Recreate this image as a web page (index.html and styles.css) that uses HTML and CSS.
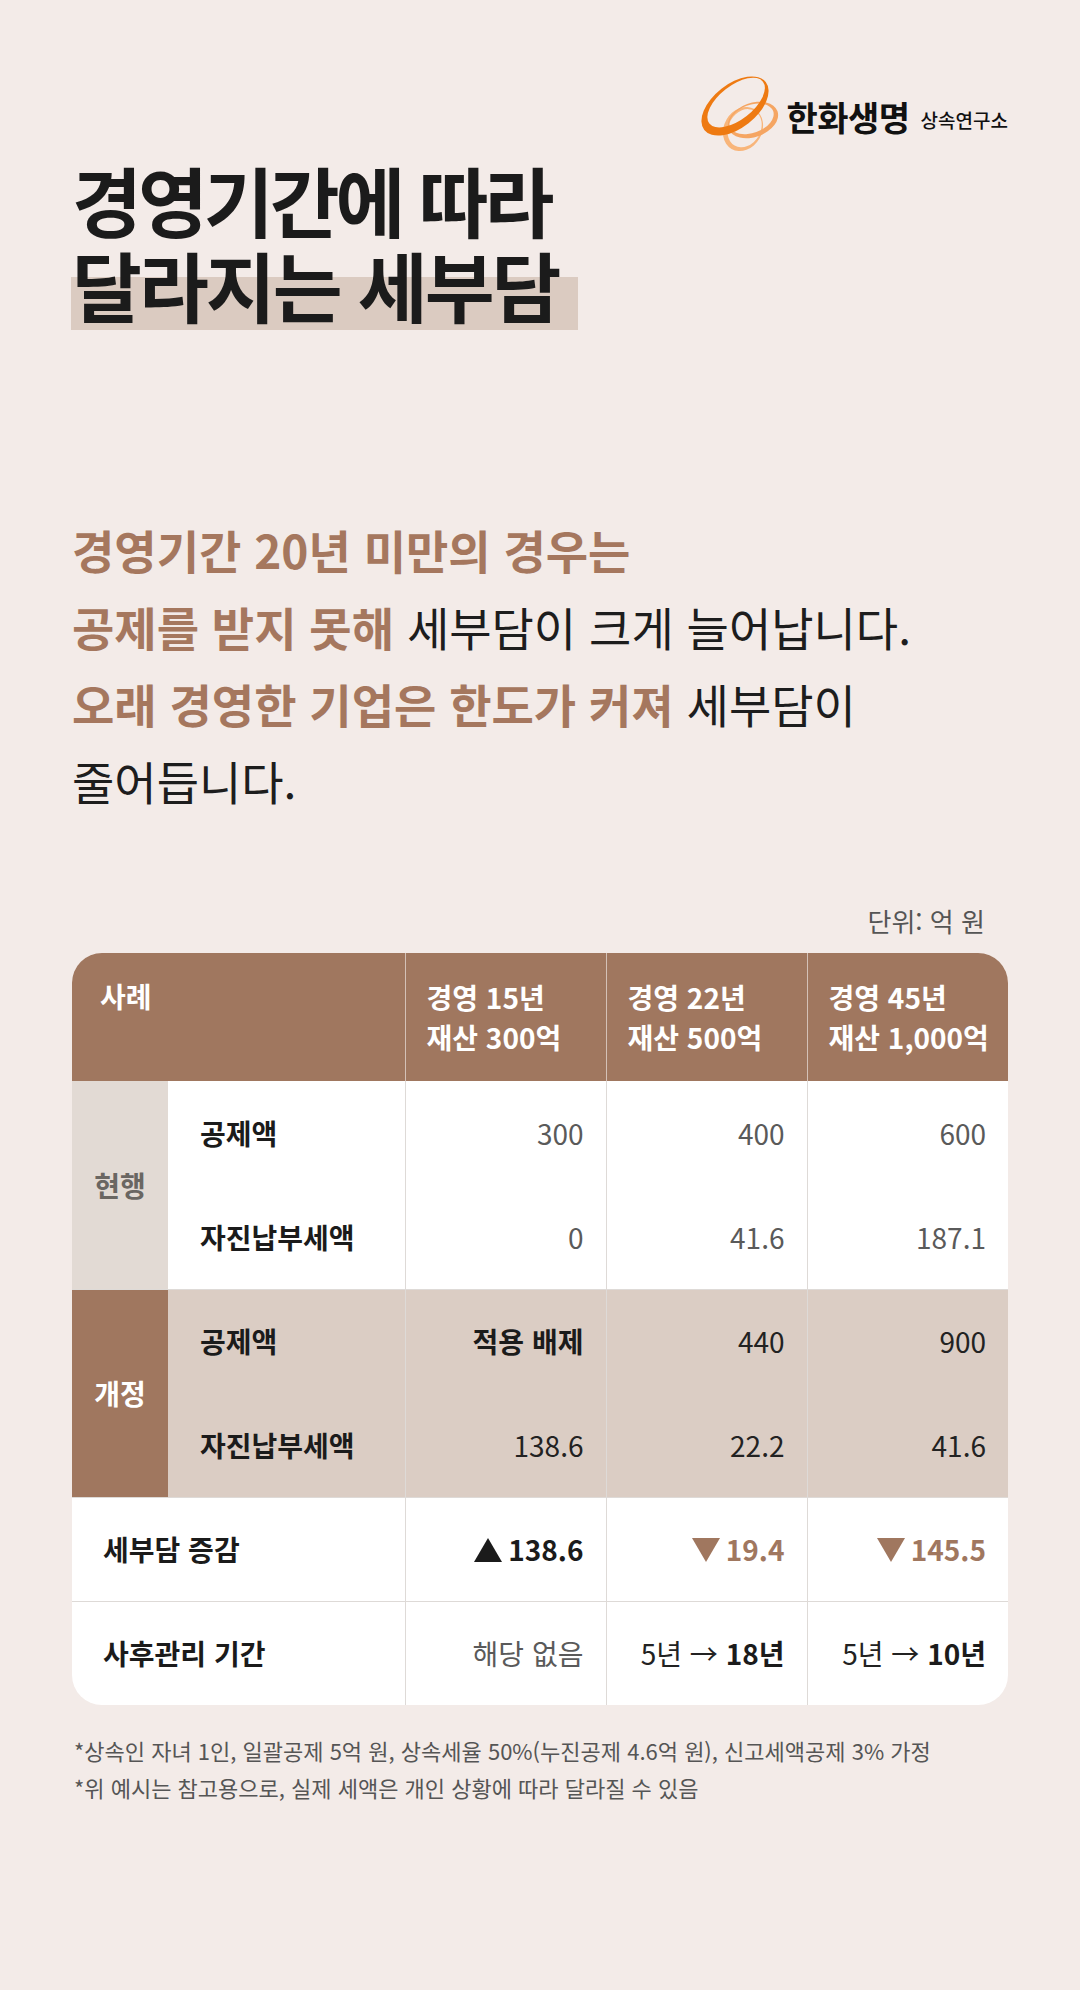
FILE: index.html
```html
<!DOCTYPE html>
<html lang="ko">
<head>
<meta charset="utf-8">
<link rel="stylesheet" href="styles.css">
</head>
<body>
<div class="page">
  <header class="brand">
    <svg class="brand-mark" viewBox="0 0 90 84" width="90" height="84" aria-hidden="true">
      <g transform="translate(47 57) rotate(-60)">
        <path fill="#f8b57a" fill-rule="evenodd" d="M -23 0 A 23 19 0 1 0 23 0 A 23 19 0 1 0 -23 0 Z M -18.5 1 A 20 16 0 1 0 21.5 1 A 20 16 0 1 0 -18.5 1 Z"/>
      </g>
      <g transform="translate(57 48) rotate(-20)">
        <path fill="#f5a562" fill-rule="evenodd" d="M -26 0 A 26 17 0 1 0 26 0 A 26 17 0 1 0 -26 0 Z M -24 -1.5 A 23 14 0 1 0 22 -1.5 A 23 14 0 1 0 -24 -1.5 Z"/>
      </g>
      <g transform="translate(39 34) rotate(-38)">
        <path fill="#ee7a12" fill-rule="evenodd" d="M -39 0 A 39 22 0 1 0 39 0 A 39 22 0 1 0 -39 0 Z M -31 -2 A 34 17 0 1 0 37 -2 A 34 17 0 1 0 -31 -2 Z"/>
      </g>
    </svg>
    <span class="brand-name">한화생명</span>
    <span class="brand-sub">상속연구소</span>
  </header>

  <h1 class="title">
    <span class="title-line">경영기간에 따라</span>
    <span class="title-line title-mark">달라지는 세부담</span>
  </h1>

  <p class="lead">
    <strong>경영기간 20년 미만의 경우는</strong><br>
    <strong>공제를 받지 못해</strong> 세부담이 크게 늘어납니다.<br>
    <strong>오래 경영한 기업은 한도가 커져</strong> 세부담이<br>
    줄어듭니다.
  </p>

  <div class="unit">단위: 억 원</div>

  <div class="table-wrap">
    <table class="tax">
      <colgroup>
        <col class="c-label">
        <col class="c-item">
        <col class="c-val">
        <col class="c-val">
        <col class="c-val">
      </colgroup>
      <thead>
        <tr>
          <th colspan="2" class="th-case">사례</th>
          <th class="th-col">경영 15년<br>재산 300억</th>
          <th class="th-col">경영 22년<br>재산 500억</th>
          <th class="th-col">경영 45년<br>재산 1,000억</th>
        </tr>
      </thead>
      <tbody>
        <tr class="now">
          <th rowspan="2" class="grp grp-now">현행</th>
          <td class="item">공제액</td>
          <td class="val muted">300</td>
          <td class="val muted">400</td>
          <td class="val muted">600</td>
        </tr>
        <tr class="now">
          <td class="item">자진납부세액</td>
          <td class="val muted">0</td>
          <td class="val muted">41.6</td>
          <td class="val muted">187.1</td>
        </tr>
        <tr class="rev sep">
          <th rowspan="2" class="grp grp-rev">개정</th>
          <td class="item">공제액</td>
          <td class="val strong">적용 배제</td>
          <td class="val">440</td>
          <td class="val">900</td>
        </tr>
        <tr class="rev">
          <td class="item">자진납부세액</td>
          <td class="val">138.6</td>
          <td class="val">22.2</td>
          <td class="val">41.6</td>
        </tr>
        <tr class="sep">
          <td colspan="2" class="item wide">세부담 증감</td>
          <td class="val strong"><svg class="tri" viewBox="0 0 28 24" width="28" height="24" aria-hidden="true"><path d="M14 0 L28 24 L0 24 Z" fill="currentColor"/></svg>138.6</td>
          <td class="val strong down"><svg class="tri" viewBox="0 0 28 24" width="28" height="24" aria-hidden="true"><path d="M0 0 L28 0 L14 24 Z" fill="currentColor"/></svg>19.4</td>
          <td class="val strong down"><svg class="tri" viewBox="0 0 28 24" width="28" height="24" aria-hidden="true"><path d="M0 0 L28 0 L14 24 Z" fill="currentColor"/></svg>145.5</td>
        </tr>
        <tr class="sep">
          <td colspan="2" class="item wide">사후관리 기간</td>
          <td class="val muted">해당 없음</td>
          <td class="val">5년 → <b>18년</b></td>
          <td class="val">5년 → <b>10년</b></td>
        </tr>
      </tbody>
    </table>
  </div>

  <div class="notes">
    <p>*상속인 자녀 1인, 일괄공제 5억 원, 상속세율 50%(누진공제 4.6억 원), 신고세액공제 3% 가정</p>
    <p>*위 예시는 참고용으로, 실제 세액은 개인 상황에 따라 달라질 수 있음</p>
  </div>
</div>
</body>
</html>
```

FILE: styles.css
```css
* { box-sizing: border-box; }

html, body {
  margin: 0;
  padding: 0;
  background: #f3ebe8;
}

body {
  font-family: "Noto Sans CJK KR", "Noto Sans", sans-serif;
  color: #1d1d1d;
}

.page {
  width: 1080px;
  min-height: 1990px;
  padding: 72px 72px 0 72px;
}

/* brand */
.brand {
  display: flex;
  justify-content: flex-end;
  align-items: center;
  height: 84px;
}

.brand-mark {
  display: block;
  margin-right: 0;
}

.brand-name {
  font-size: 34px;
  font-weight: 700;
  color: #111;
  letter-spacing: -0.5px;
  margin-top: 4px;
}

.brand-sub {
  font-size: 19px;
  font-weight: 500;
  color: #111;
  margin-left: 11px;
  margin-top: 10px;
}

/* title */
.title {
  margin: 1px 0 0 0;
  font-size: 76px;
  line-height: 85px;
  font-weight: 700;
  letter-spacing: -0.053em;
  color: #1b1b1b;
}

.title-line {
  display: block;
}

.title-mark {
  display: inline-block;
  margin-left: -1px;
  padding: 0 20px 3px 1px;
  letter-spacing: -0.04em;
  background: linear-gradient(to bottom, transparent 35px, #dbcbc1 35px);
}

/* lead paragraph */
.lead {
  margin: 181px 0 0 0;
  font-size: 46px;
  line-height: 77px;
  font-weight: 400;
  letter-spacing: 0;
  color: #1d1d1d;
}

.lead strong {
  font-weight: 700;
  color: #a5775e;
}

/* unit */
.unit {
  margin-top: 86px;
  text-align: right;
  padding-right: 23px;
  font-size: 26px;
  line-height: 32px;
  color: #555;
}

/* table */
.table-wrap {
  margin-top: 16px;
  border-radius: 30px;
  overflow: hidden;
  background: #fff;
}

.tax {
  width: 936px;
  border-collapse: collapse;
  table-layout: fixed;
  font-size: 28px;
}

.c-label { width: 96px; }
.c-item { width: 237px; }
.c-val { width: 201px; }

.tax thead th {
  background: #a0775f;
  color: #fff;
  font-weight: 700;
  text-align: left;
  height: 128px;
  line-height: 40px;
}

.th-case {
  vertical-align: top;
  padding: 23px 0 0 28px;
}

.th-col {
  vertical-align: middle;
  padding: 0 0 0 21px;
  border-left: 1px solid rgba(255, 255, 255, 0.55);
}

.tax tbody td,
.tax tbody th {
  height: 104px;
  line-height: 40px;
  vertical-align: middle;
}

.tax tbody tr.sep > * {
  border-top: 1px solid #dedad7;
}

.grp {
  font-weight: 700;
  text-align: center;
}

.grp-now {
  background: #e2dad4;
  color: #6a6662;
}

.grp-rev {
  background: #a0775f;
  color: #fff;
}

.item {
  font-weight: 700;
  color: #1b1b1b;
  padding-left: 32px;
}

.item.wide {
  padding-left: 31px;
}

.val {
  text-align: right;
  padding-right: 22px;
  color: #222;
  border-left: 1px solid #dedad7;
}

.val.muted { color: #5a5a5a; }
.val.strong { font-weight: 700; color: #1b1b1b; }
.val.strong.down { color: #a0775f; }
.val b { font-weight: 700; color: #1b1b1b; }

.tri {
  display: inline-block;
  vertical-align: -1px;
  margin-right: 6px;
}

.rev td {
  background: #dbcdc4;
}

/* notes */
.notes {
  margin-top: 27px;
  padding-left: 2px;
  font-size: 22px;
  line-height: 37px;
  color: #555;
  letter-spacing: 0;
}

.notes p {
  margin: 0;
}
```
